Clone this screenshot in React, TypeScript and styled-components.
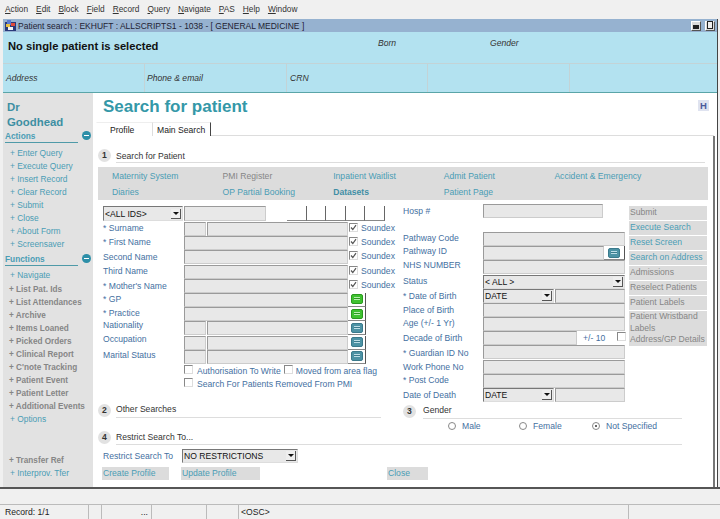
import styled, { createGlobalStyle } from "styled-components";

const GlobalStyle = createGlobalStyle`
    html, body {
        margin: 0;
        padding: 0;
        background: #f0f0f0;
    }
    * {
        box-sizing: border-box;
    }
`;

const BLUE = "#44709f";
const TEAL = "#4a9db5";
const GREY = "#868686";
const TEXT_SIZE = "8.6px";

const Page = styled.div`
    width: 720px;
    height: 519px;
    overflow: hidden;
    display: flex;
    flex-direction: column;
    font-family: "Liberation Sans", Arial, sans-serif;
    font-size: ${TEXT_SIZE};
    color: #333;
    background: #f0f0f0;
`;

const MenuBar = styled.div`
    height: 19px;
    flex: none;
    display: flex;
    align-items: center;
    gap: 8px;
    padding: 0 0 2px 5px;
    font-size: 8.3px;
    color: #333;
    u {
        text-decoration-thickness: 1px;
    }
`;

const Win = styled.div`
    height: 468px;
    flex: none;
    margin-left: 3px;
    width: 715px;
    display: flex;
    flex-direction: column;
    border-right: 1px solid #444;
    background: #fff;
`;

const TitleBar = styled.div`
    height: 13px;
    flex: none;
    display: flex;
    align-items: center;
    gap: 2px;
    padding-left: 2px;
    background: #96b2d0;
    font-size: 8.5px;
    color: #223;
`;

const TitleText = styled.span`
    flex: 1;
`;

const WinButton = styled.span`
    width: 10px;
    height: 10px;
    margin-right: 2px;
    background: #dcdcdc;
    border: 1px solid #fff;
    border-right-color: #555;
    border-bottom-color: #555;
    display: flex;
    align-items: flex-end;
    justify-content: center;
    padding: 1px;
    &::after {
        content: "";
        display: block;
        width: 6px;
        height: ${(p: { $max?: boolean }) => (p.$max ? "6px" : "2px")};
        border: 1px solid #222;
        background: ${(p: { $max?: boolean }) => (p.$max ? "#eee" : "#222")};
    }
`;

const PatientHead = styled.div`
    height: 32px;
    flex: none;
    display: flex;
    padding: 6px 0 0 5px;
    background: #b3e2f0;
    border-bottom: 1px solid #c3d3d6;
`;

const PatientName = styled.div`
    width: 370px;
    font-size: 11.2px;
    font-weight: bold;
    color: #111;
    padding-top: 2px;
`;

const HeadLabel = styled.div`
    width: 112px;
    font-style: italic;
    font-size: ${TEXT_SIZE};
    color: #333;
`;

const AddressRow = styled.div`
    height: 29px;
    flex: none;
    display: grid;
    grid-template-columns: 142px 142px 141px 142px 1fr;
    background: #b3e2f0;
    border-bottom: 1px solid #5aa5a8;
`;

const AddressCell = styled.div`
    padding-left: 3px;
    display: flex;
    align-items: center;
    font-style: italic;
    font-size: ${TEXT_SIZE};
    color: #333;
    border-right: 1px solid #c3d3d6;
    &:nth-child(2) {
        padding-left: 2px;
    }
    &:last-child {
        border-right: none;
    }
`;

const Body = styled.div`
    flex: 1;
    min-height: 0;
    display: flex;
`;

const Sidebar = styled.div`
    width: 90px;
    flex: none;
    background: #e2e2e2;
    padding: 7px 0 0 2px;
`;

const DoctorName = styled.div`
    font-size: 11.4px;
    line-height: 15px;
    font-weight: bold;
    color: #3d8fa3;
    padding-left: 2px;
`;

const SideHead = styled.div`
    height: 13px;
    width: 86px;
    position: relative;
    display: flex;
    align-items: center;
    padding-bottom: 1px;
    font-size: 8.3px;
    font-weight: bold;
    color: ${TEAL};
    margin-top: ${(p: { $top?: number }) => p.$top ?? 0}px;
    &::after {
        content: "";
        position: absolute;
        left: 0;
        bottom: 0;
        width: 73px;
        height: 1px;
        background: #4f9aa8;
    }
`;

const MinusIcon = styled.span`
    position: absolute;
    right: 0;
    top: 1px;
    width: 9px;
    height: 9px;
    border-radius: 50%;
    background: #2d8fa8;
    &::after {
        content: "";
        position: absolute;
        left: 2px;
        top: 4px;
        width: 5px;
        height: 1px;
        background: #fff;
    }
`;

const SideList = styled.div`
    padding-top: 3.5px;
`;

const SideItem = styled.div<{ $off?: boolean; $top?: number }>`
    height: 13.1px;
    line-height: 13px;
    font-size: ${(p) => (p.$off ? 8.2 : 8.4)}px;
    padding-left: ${(p) => (p.$off ? 4 : 5)}px;
    white-space: nowrap;
    color: ${(p) => (p.$off ? GREY : TEAL)};
    font-weight: ${(p) => (p.$off ? "bold" : "normal")};
    margin-top: ${(p) => p.$top ?? 0}px;
`;

const Main = styled.div`
    flex: 1;
    min-width: 0;
    padding-left: 3px;
    display: flex;
    flex-direction: column;
`;

const TitleRow = styled.div`
    height: 29px;
    flex: none;
    display: flex;
    justify-content: space-between;
    padding: 4px 8px 0 7px;
`;

const PageTitle = styled.div`
    font-size: 17px;
    line-height: 20px;
    font-weight: bold;
    color: #3498a8;
`;

const HelpBadge = styled.span`
    width: 11px;
    height: 11px;
    margin-top: 3px;
    background: #dfe3f0;
    color: #4a5a9a;
    font-size: 9.5px;
    line-height: 11px;
    font-weight: bold;
    text-align: center;
`;

const Tabs = styled.div`
    height: 14px;
    flex: none;
    width: 618px;
    display: flex;
    border-bottom: 1px solid #ddd;
`;

const Tab = styled.div<{ $active?: boolean }>`
    height: 14px;
    width: ${(p) => (p.$active ? 59 : 56)}px;
    padding-left: ${(p) => (p.$active ? 4 : 13)}px;
    line-height: 14px;
    font-size: ${TEXT_SIZE};
    color: #222;
    background: #fff;
    border-left: 1px solid ${(p) => (p.$active ? "#ddd" : "transparent")};
    border-right: ${(p) => (p.$active ? "1px solid #444" : "none")};
    border-top: 1px solid #eee;
`;

const Panel = styled.div`
    flex: 1;
    min-height: 0;
    width: 619px;
    padding: 13px 0 0 2px;
    border-right: 2px solid #777;
`;

const SectionRow = styled.div<{ $w?: number; $h?: number; $top?: number; $left?: number }>`
    height: ${(p) => p.$h ?? 14}px;
    width: ${(p) => p.$w ?? 607}px;
    margin-top: ${(p) => p.$top ?? 0}px;
    margin-left: ${(p) => p.$left ?? 0}px;
    display: flex;
    align-items: flex-end;
`;

const Badge = styled.span<{ $gap?: number }>`
    width: 13px;
    height: 13px;
    flex: none;
    margin: -3px ${(p) => p.$gap ?? 5}px 1px 0;
    border-radius: 50%;
    background: #e2e2e2;
    color: #333;
    font-size: 8.6px;
    line-height: 13px;
    font-weight: bold;
    text-align: center;
`;

const SectionTitle = styled.div<{ $pad?: number }>`
    flex: 1;
    height: 100%;
    display: flex;
    align-items: flex-end;
    font-size: ${TEXT_SIZE};
    line-height: 11px;
    padding-bottom: ${(p) => p.$pad ?? 2}px;
    color: #333;
    border-bottom: 1px solid #ddd;
`;

const NavBar = styled.div`
    width: 610px;
    height: 33px;
    margin-top: 4px;
    padding: 2px 0 0 14px;
    display: grid;
    grid-template-columns: repeat(5, 110.6px);
    grid-auto-rows: 16px;
    background: #dcdcdc;
`;

const NavLink = styled.div<{ $tone?: "off" | "bold" }>`
    line-height: 14px;
    font-size: ${TEXT_SIZE};
    white-space: nowrap;
    color: ${(p) => (p.$tone === "off" ? GREY : p.$tone === "bold" ? "#3f8ea5" : TEAL)};
    font-weight: ${(p) => (p.$tone === "bold" ? "bold" : "normal")};
`;

const FormArea = styled.div`
    display: flex;
    margin-top: 4px;
    padding-left: 5px;
    height: 229px;
`;

const LeftCol = styled.div`
    width: 300px;
    flex: none;
    padding-top: 2px;
`;

const RightCol = styled.div`
    width: 226px;
    flex: none;
`;

const ButtonCol = styled.div`
    width: 78px;
    flex: none;
    padding-top: 2px;
`;

const IdRow = styled.div`
    height: 16px;
    display: flex;
    gap: 1px;
`;

const Row = styled.div<{ $labelW: number; $top?: number }>`
    height: 14.2px;
    display: grid;
    grid-template-columns: ${(p) => p.$labelW}px 1fr;
    margin-top: ${(p) => p.$top ?? 0}px;
`;

const Label = styled.div<{ $lift?: number }>`
    height: 14px;
    line-height: 14px;
    font-size: ${TEXT_SIZE};
    color: ${BLUE};
    white-space: nowrap;
    transform: translateY(${(p) => -(p.$lift ?? 0)}px);
`;

const Fields = styled.div`
    display: flex;
    align-items: flex-start;
    gap: 1px;
    height: 14px;
`;

const Input = styled.div<{ $w?: number; $h?: number }>`
    height: ${(p) => p.$h ?? 14}px;
    flex: ${(p) => (p.$w ? "none" : "1")};
    width: ${(p) => (p.$w ? `${p.$w}px` : "auto")};
    background: #e8e8e8;
    border: 1px solid #9a9a9a;
    border-right-color: #ccc;
    border-bottom-color: #ccc;
`;

const DigitBoxes = styled.div`
    display: flex;
    margin-left: 20px;
`;

const DigitBox = styled.div`
    width: 19.6px;
    height: 15px;
    background: #fff;
    border-right: 1px solid #666;
    border-bottom: 1px solid #888;
`;

const Select = styled.div<{ $w?: number; $h?: number }>`
    height: ${(p) => p.$h ?? 14}px;
    width: ${(p) => (p.$w ? `${p.$w}px` : "100%")};
    flex: none;
    display: flex;
    align-items: center;
    justify-content: space-between;
    padding: 0 1px 0 1px;
    font-size: ${TEXT_SIZE};
    color: #111;
    background: #e8e8e8;
    border: 1px solid #777;
    border-right-color: #ddd;
    border-bottom-color: #ddd;
`;

const Arrow = styled.span`
    width: 10px;
    height: 10px;
    flex: none;
    display: flex;
    align-items: center;
    justify-content: center;
    background: #eee;
    border-right: 1px solid #555;
    border-bottom: 1px solid #555;
    &::after {
        content: "";
        border: 3px solid transparent;
        border-top-color: #111;
        border-bottom: none;
    }
`;

const CheckBox = styled.span`
    width: 9px;
    height: 9px;
    flex: none;
    display: inline-flex;
    align-items: center;
    justify-content: center;
    background: #fff;
    border: 1px solid #888;
    border-right-color: #ddd;
    border-bottom-color: #ddd;
`;

const DecadeCheck = styled(CheckBox)`
    margin-top: 1px;
`;

const Soundex = styled.div`
    display: flex;
    align-items: flex-start;
    gap: 3px;
    padding-top: 1px;
    font-size: ${TEXT_SIZE};
    line-height: 11px;
    color: ${BLUE};
    white-space: nowrap;
`;

const LookupWrap = styled.div<{ $wide?: boolean }>`
    width: ${(p) => (p.$wide ? 21 : 18)}px;
    height: 14px;
    flex: none;
    margin-left: -1px;
    display: flex;
    align-items: center;
    justify-content: center;
    background: #fff;
    border-right: 1px solid #555;
    border-bottom: 1px solid #888;
`;

const FlagRow = styled.div<{ $top?: number }>`
    height: 14px;
    margin-top: ${(p) => p.$top ?? 0}px;
    display: flex;
    align-items: flex-start;
    padding: 1px 0 0 81px;
    font-size: ${TEXT_SIZE};
    line-height: 12px;
    color: ${BLUE};
    white-space: nowrap;
`;

const FlagText = styled.span<{ $gap: number }>`
    margin: 0 3px 0 ${(p) => p.$gap}px;
`;

const PlusMinus = styled.span`
    width: 38px;
    flex: none;
    padding: 2px 0 0 5px;
    font-size: ${TEXT_SIZE};
    color: ${BLUE};
`;

const ActionButton = styled.div<{ $off?: boolean; $last?: boolean }>`
    min-height: 14px;
    margin-bottom: ${(p) => (p.$last ? 0 : 1)}px;
    padding-left: 1px;
    background: #dcdcdc;
    font-size: ${TEXT_SIZE};
    line-height: ${(p) => (p.$last ? 11.6 : 13)}px;
    white-space: nowrap;
    color: ${(p) => (p.$off ? GREY : TEAL)};
`;

const RadioRow = styled.div`
    display: flex;
    height: 13px;
    margin-left: 45px;
    padding-top: 2px;
`;

const RadioItem = styled.div<{ $w: number }>`
    width: ${(p) => p.$w}px;
    flex: none;
    display: flex;
    align-items: center;
    gap: 6px;
    font-size: ${TEXT_SIZE};
    white-space: nowrap;
    color: ${BLUE};
`;

const Radio = styled.span<{ $on?: boolean }>`
    width: 8px;
    height: 8px;
    border-radius: 50%;
    background: #fff;
    border: 1px solid #888;
    display: flex;
    align-items: center;
    justify-content: center;
    &::after {
        content: "";
        width: 2px;
        height: 2px;
        border-radius: 50%;
        background: ${(p) => (p.$on ? "#333" : "transparent")};
    }
`;

const RestrictRow = styled.div`
    display: flex;
    align-items: center;
    height: 14px;
    margin-top: 4px;
    padding-left: 5px;
`;

const RestrictLabel = styled.span`
    width: 79px;
    flex: none;
    font-size: ${TEXT_SIZE};
    color: ${BLUE};
`;

const FootRow = styled.div`
    display: flex;
    margin-top: 4px;
    padding-left: 4px;
`;

const FootButton = styled.div<{ $w: number; $gap?: number }>`
    width: ${(p) => p.$w}px;
    height: 13px;
    margin-left: ${(p) => p.$gap ?? 0}px;
    padding-left: 1px;
    background: #dcdcdc;
    font-size: ${TEXT_SIZE};
    line-height: 13px;
    color: ${TEAL};
`;

const MessageBar = styled.div`
    height: 18px;
    flex: none;
    background: #f0f0f0;
    border-top: 2px solid #555;
    border-bottom: 1px solid #bbb;
`;

const StatusBar = styled.div`
    height: 14px;
    flex: none;
    padding-left: 3px;
    display: grid;
    grid-template-columns: 86px 13px 50px 55px 32px 390px 1fr;
    font-size: ${TEXT_SIZE};
    color: #222;
`;

const StatusCell = styled.div<{ $end?: boolean }>`
    display: flex;
    align-items: center;
    justify-content: ${(p) => (p.$end ? "flex-end" : "flex-start")};
    padding: 0 3px 0 2px;
    border-right: 1px solid #bbb;
    &:last-child {
        border-right: none;
    }
`;

function LookupIcon({ green }: { green?: boolean }) {
    const fill = green ? "#3fc230" : "#4d93a5";
    const edge = green ? "#2a9a1e" : "#3a7a8c";
    const bar = green ? "#b9eeb0" : "#bcdde6";
    return (
        <svg width="12" height="10" viewBox="0 0 12 10">
            <rect x="0.5" y="0.5" width="11" height="9" rx="1.5" fill={fill} stroke={edge} />
            <rect x="3" y="3" width="6" height="3" fill={bar} />
            <rect x="3" y="4" width="6" height="1" fill={edge} />
        </svg>
    );
}

function WindowIcon() {
    return (
        <svg width="11" height="11" viewBox="0 0 11 11">
            <rect x="0" y="2" width="11" height="9" fill="#2a3a7a" />
            <rect x="2" y="0" width="4" height="5" fill="#5a7ad0" />
            <rect x="1" y="4" width="4" height="3" fill="#e8c040" />
            <rect x="6" y="3" width="4" height="3" fill="#e04a3a" />
            <rect x="3" y="7" width="5" height="3" fill="#f2f2f2" />
        </svg>
    );
}

function Tick() {
    return (
        <svg width="7" height="7" viewBox="0 0 7 7">
            <path d="M1 3.5 L2.8 5.5 L6 1.2" fill="none" stroke="#555" strokeWidth="1.2" />
        </svg>
    );
}

const MENU = ["Action", "Edit", "Block", "Field", "Record", "Query", "Navigate", "PAS", "Help", "Window"];

const ACTIONS = ["Enter Query", "Execute Query", "Insert Record", "Clear Record", "Submit", "Close", "About Form", "Screensaver"];

const FUNCTIONS: { text: string; off?: boolean; top?: number }[] = [
    { text: "Navigate" },
    { text: "List Pat. Ids", off: true },
    { text: "List Attendances", off: true },
    { text: "Archive", off: true },
    { text: "Items Loaned", off: true },
    { text: "Picked Orders", off: true },
    { text: "Clinical Report", off: true },
    { text: "C'note Tracking", off: true },
    { text: "Patient Event", off: true },
    { text: "Patient Letter", off: true },
    { text: "Additional Events", off: true },
    { text: "Options" },
    { text: "Transfer Ref", off: true, top: 27 },
    { text: "Interprov. Tfer" },
];

const NAV: { text: string; tone?: "off" | "bold" }[] = [
    { text: "Maternity System" },
    { text: "PMI Register", tone: "off" },
    { text: "Inpatient Waitlist" },
    { text: "Admit Patient" },
    { text: "Accident & Emergency" },
    { text: "Diaries" },
    { text: "OP Partial Booking" },
    { text: "Datasets", tone: "bold" },
    { text: "Patient Page" },
];

type LeftKind = "soundex" | "wide" | "green" | "split";

const LEFT_ROWS: { label: string; kind: LeftKind; lift?: number }[] = [
    { label: "* Surname", kind: "split", lift: 1 },
    { label: "* First Name", kind: "soundex", lift: 1 },
    { label: "Second Name", kind: "soundex" },
    { label: "Third Name", kind: "soundex", lift: 1 },
    { label: "* Mother's Name", kind: "soundex" },
    { label: "* GP", kind: "green", lift: 1 },
    { label: "* Practice", kind: "green", lift: 1 },
    { label: "Nationality", kind: "wide", lift: 3 },
    { label: "Occupation", kind: "wide", lift: 4 },
    { label: "Marital Status", kind: "wide", lift: 2 },
];

const ACTION_BUTTONS: { text: string; off?: boolean }[] = [
    { text: "Submit", off: true },
    { text: "Execute Search" },
    { text: "Reset Screen" },
    { text: "Search on Address" },
    { text: "Admissions", off: true },
    { text: "Reselect Patients", off: true },
    { text: "Patient Labels", off: true },
];

function SoundexCheck() {
    return (
        <Soundex>
            <CheckBox>
                <Tick />
            </CheckBox>
            Soundex
        </Soundex>
    );
}

function LeftFields({ kind }: { kind: LeftKind }) {
    if (kind === "split") {
        return (
            <Fields>
                <Input $w={22} />
                <Input $w={141} />
                <SoundexCheck />
            </Fields>
        );
    }
    if (kind === "soundex") {
        return (
            <Fields>
                <Input $w={164} />
                <SoundexCheck />
            </Fields>
        );
    }
    if (kind === "green") {
        return (
            <Fields>
                <Input $w={164} />
                <LookupWrap>
                    <LookupIcon green />
                </LookupWrap>
            </Fields>
        );
    }
    return (
        <Fields>
            <Input $w={22} />
            <Input $w={141} />
            <LookupWrap>
                <LookupIcon />
            </LookupWrap>
        </Fields>
    );
}

export default function App() {
    return (
        <Page>
            <GlobalStyle />
            <MenuBar>
                {MENU.map((item) => (
                    <span key={item}>
                        <u>{item[0]}</u>
                        {item.slice(1)}
                    </span>
                ))}
            </MenuBar>
            <Win>
                <TitleBar>
                    <WindowIcon />
                    <TitleText>Patient search : EKHUFT : ALLSCRIPTS1 - 1038 - [ GENERAL MEDICINE ]</TitleText>
                    <WinButton />
                    <WinButton $max />
                </TitleBar>
                <PatientHead>
                    <PatientName>No single patient is selected</PatientName>
                    <HeadLabel>Born</HeadLabel>
                    <HeadLabel>Gender</HeadLabel>
                </PatientHead>
                <AddressRow>
                    <AddressCell>Address</AddressCell>
                    <AddressCell>Phone &amp; email</AddressCell>
                    <AddressCell>CRN</AddressCell>
                    <AddressCell />
                    <AddressCell />
                </AddressRow>
                <Body>
                    <Sidebar>
                        <DoctorName>
                            Dr
                            <br />
                            Goodhead
                        </DoctorName>
                        <SideHead>
                            Actions
                            <MinusIcon />
                        </SideHead>
                        <SideList>
                            {ACTIONS.map((item) => (
                                <SideItem key={item}>+ {item}</SideItem>
                            ))}
                        </SideList>
                        <SideHead $top={1.7}>
                            Functions
                            <MinusIcon />
                        </SideHead>
                        <SideList>
                            {FUNCTIONS.map((item) => (
                                <SideItem key={item.text} $off={item.off} $top={item.top}>
                                    + {item.text}
                                </SideItem>
                            ))}
                        </SideList>
                    </Sidebar>
                    <Main>
                        <TitleRow>
                            <PageTitle>Search for patient</PageTitle>
                            <HelpBadge>H</HelpBadge>
                        </TitleRow>
                        <Tabs>
                            <Tab>Profile</Tab>
                            <Tab $active>Main Search</Tab>
                        </Tabs>
                        <Panel>
                            <SectionRow>
                                <Badge>1</Badge>
                                <SectionTitle $pad={0}>Search for Patient</SectionTitle>
                            </SectionRow>
                            <NavBar>
                                {NAV.map((item) => (
                                    <NavLink key={item.text} $tone={item.tone}>
                                        {item.text}
                                    </NavLink>
                                ))}
                            </NavBar>
                            <FormArea>
                                <LeftCol>
                                    <IdRow>
                                        <Select $w={80} $h={15}>
                                            &lt;ALL IDS&gt;
                                            <Arrow />
                                        </Select>
                                        <Input $w={82} $h={15} />
                                        <DigitBoxes>
                                            {[0, 1, 2, 3, 4].map((n) => (
                                                <DigitBox key={n} />
                                            ))}
                                        </DigitBoxes>
                                    </IdRow>
                                    {LEFT_ROWS.map((row) => (
                                        <Row key={row.label} $labelW={81}>
                                            <Label $lift={row.lift}>{row.label}</Label>
                                            <LeftFields kind={row.kind} />
                                        </Row>
                                    ))}
                                    <FlagRow>
                                        <CheckBox />
                                        <FlagText $gap={4}>Authorisation To Write</FlagText>
                                        <CheckBox />
                                        <FlagText $gap={3}>Moved from area flag</FlagText>
                                    </FlagRow>
                                    <FlagRow $top={-1}>
                                        <CheckBox />
                                        <FlagText $gap={4}>Search For Patients Removed From PMI</FlagText>
                                    </FlagRow>
                                    <SectionRow $w={283} $h={15} $top={12} $left={-5}>
                                        <Badge>2</Badge>
                                        <SectionTitle>Other Searches</SectionTitle>
                                    </SectionRow>
                                </LeftCol>
                                <RightCol>
                                    <Row $labelW={80}>
                                        <Label>Hosp #</Label>
                                        <Fields>
                                            <Input $w={120} />
                                        </Fields>
                                    </Row>
                                    <Row $labelW={80} $top={13.8}>
                                        <Label $lift={1}>Pathway Code</Label>
                                        <Fields>
                                            <Input $w={142} />
                                        </Fields>
                                    </Row>
                                    <Row $labelW={80}>
                                        <Label $lift={2}>Pathway ID</Label>
                                        <Fields>
                                            <Input $w={121} />
                                            <LookupWrap $wide>
                                                <LookupIcon />
                                            </LookupWrap>
                                        </Fields>
                                    </Row>
                                    <Row $labelW={80}>
                                        <Label $lift={2}>NHS NUMBER</Label>
                                        <Fields>
                                            <Input $w={142} />
                                        </Fields>
                                    </Row>
                                    <Row $labelW={80}>
                                        <Label $lift={1}>Status</Label>
                                        <Fields>
                                            <Select $w={142}>
                                                &lt; ALL &gt;
                                                <Arrow />
                                            </Select>
                                        </Fields>
                                    </Row>
                                    <Row $labelW={80}>
                                        <Label>* Date of Birth</Label>
                                        <Fields>
                                            <Select $w={71}>
                                                DATE
                                                <Arrow />
                                            </Select>
                                            <Input $w={70} />
                                        </Fields>
                                    </Row>
                                    <Row $labelW={80}>
                                        <Label>Place of Birth</Label>
                                        <Fields>
                                            <Input $w={142} />
                                        </Fields>
                                    </Row>
                                    <Row $labelW={80}>
                                        <Label $lift={1}>Age (+/- 1 Yr)</Label>
                                        <Fields>
                                            <Input $w={142} />
                                        </Fields>
                                    </Row>
                                    <Row $labelW={80}>
                                        <Label>Decade of Birth</Label>
                                        <Fields>
                                            <Input $w={94} />
                                            <PlusMinus>+/- 10</PlusMinus>
                                            <DecadeCheck />
                                        </Fields>
                                    </Row>
                                    <Row $labelW={80}>
                                        <Label $lift={-1}>* Guardian ID No</Label>
                                        <Fields>
                                            <Input $w={142} />
                                        </Fields>
                                    </Row>
                                    <Row $labelW={80}>
                                        <Label>Work Phone No</Label>
                                        <Fields>
                                            <Input $w={142} />
                                        </Fields>
                                    </Row>
                                    <Row $labelW={80}>
                                        <Label $lift={1}>* Post Code</Label>
                                        <Fields>
                                            <Input $w={142} />
                                        </Fields>
                                    </Row>
                                    <Row $labelW={80}>
                                        <Label>Date of Death</Label>
                                        <Fields>
                                            <Select $w={71}>
                                                DATE
                                                <Arrow />
                                            </Select>
                                            <Input $w={70} />
                                        </Fields>
                                    </Row>
                                    <SectionRow $w={279} $h={15} $top={1.5}>
                                        <Badge $gap={7}>3</Badge>
                                        <SectionTitle>Gender</SectionTitle>
                                    </SectionRow>
                                    <RadioRow>
                                        <RadioItem $w={71}>
                                            <Radio />
                                            Male
                                        </RadioItem>
                                        <RadioItem $w={73}>
                                            <Radio />
                                            Female
                                        </RadioItem>
                                        <RadioItem $w={90}>
                                            <Radio $on />
                                            Not Specified
                                        </RadioItem>
                                    </RadioRow>
                                </RightCol>
                                <ButtonCol>
                                    {ACTION_BUTTONS.map((item) => (
                                        <ActionButton key={item.text} $off={item.off}>
                                            {item.text}
                                        </ActionButton>
                                    ))}
                                    <ActionButton $off $last>
                                        Patient Wristband
                                        <br />
                                        Labels
                                        <br />
                                        Address/GP Details
                                    </ActionButton>
                                </ButtonCol>
                            </FormArea>
                            <SectionRow $w={584} $h={12}>
                                <Badge>4</Badge>
                                <SectionTitle $pad={1}>Restrict Search To...</SectionTitle>
                            </SectionRow>
                            <RestrictRow>
                                <RestrictLabel>Restrict Search To</RestrictLabel>
                                <Select $w={116}>
                                    NO RESTRICTIONS
                                    <Arrow />
                                </Select>
                            </RestrictRow>
                            <FootRow>
                                <FootButton $w={67}>Create Profile</FootButton>
                                <FootButton $w={79} $gap={12}>
                                    Update Profile
                                </FootButton>
                                <FootButton $w={41} $gap={127}>
                                    Close
                                </FootButton>
                            </FootRow>
                        </Panel>
                    </Main>
                </Body>
            </Win>
            <MessageBar />
            <StatusBar>
                <StatusCell>Record: 1/1</StatusCell>
                <StatusCell />
                <StatusCell $end>...</StatusCell>
                <StatusCell />
                <StatusCell />
                <StatusCell>&lt;OSC&gt;</StatusCell>
                <StatusCell />
            </StatusBar>
        </Page>
    );
}
